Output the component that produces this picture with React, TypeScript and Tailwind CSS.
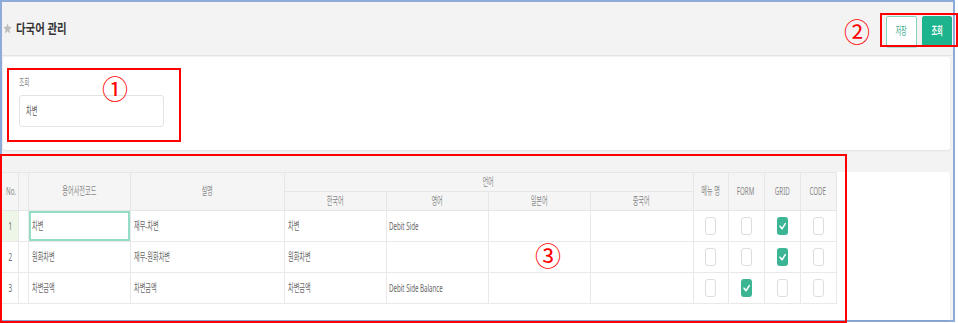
import React from 'react';

type Row = {
  no: number;
  code: string;
  desc: string;
  ko: string;
  en: string;
  menu: boolean;
  form: boolean;
  grid: boolean;
  codeChk: boolean;
};

const rows: Row[] = [
  { no: 1, code: '차변', desc: '재무-차변', ko: '차변', en: 'Debit Side', menu: false, form: false, grid: true, codeChk: false },
  { no: 2, code: '원화차변', desc: '재무-원화차변', ko: '원화차변', en: '', menu: false, form: false, grid: true, codeChk: false },
  { no: 3, code: '차변금액', desc: '차변금액', ko: '차변금액', en: 'Debit Side Balance', menu: false, form: true, grid: false, codeChk: false },
];

const colWidths = [16, 10, 102, 154, 102, 102, 102, 103, 35, 36, 36, 36];

// narrow text, the capture is squeezed sideways
const T = ({ children, center }: { children: React.ReactNode; center?: boolean }) => (
  <span
    className={
      'inline-block whitespace-nowrap scale-x-[0.56] ' + (center ? 'origin-center' : 'origin-left')
    }
  >
    {children}
  </span>
);

const Check = ({ on }: { on: boolean }) =>
  on ? (
    <span className="inline-block w-[11px] h-[18px] rounded-[3px] bg-[#3bb594] align-middle">
      <svg width="11" height="18" viewBox="0 0 11 18">
        <path d="M3 9.2 L5 11.8 L8.3 6.6" fill="none" stroke="#fff" strokeWidth="1.5" strokeLinecap="round" strokeLinejoin="round" />
      </svg>
    </span>
  ) : (
    <span className="inline-block w-[11px] h-[18px] rounded-[3px] border border-[#dddddd] bg-white align-middle" />
  );

const Mark = ({ n, cls }: { n: string; cls: string }) => (
  <span className={'absolute text-[26px] leading-none text-[#ff0000] font-["Noto_Sans_CJK_KR",sans-serif] ' + cls}>
    {n}
  </span>
);

const Box = ({ cls }: { cls: string }) => (
  <div className={'absolute border-2 border-[#ff0000] pointer-events-none ' + cls} />
);

const th = 'border border-[#e6e6e6] bg-[#f5f5f5] font-normal text-[11px] text-[#888] text-center p-0';
const td = 'border border-[#e9e9e9] text-[11px] text-[#666] p-0';

export default function App() {
  return (
    <div className="relative w-[958px] h-[323px] bg-white font-['Noto_Sans','Noto_Sans_CJK_KR',sans-serif] overflow-hidden">
      <div className="w-[955px] h-[322px] border-2 border-[#8eaadb] bg-[#f3f3f3] flex flex-col">
        {/* page header */}
        <div className="h-[54px] shrink-0 border-b border-[#e4e4e4] flex items-center justify-between pl-[1px] pr-[1px]">
          <div className="flex items-center gap-[4px]">
            <svg width="9" height="11" viewBox="0 0 10 10" preserveAspectRatio="none">
              <path d="M5 0.3 L6.3 3.5 L9.7 3.7 L7.1 6 L7.9 9.6 L5 7.6 L2.1 9.6 L2.9 6 L0.3 3.7 L3.7 3.5 Z" fill="#bdbdbd" />
            </svg>
            <span className="inline-block origin-left scale-x-[0.8] text-[13px] font-semibold text-[#333] whitespace-nowrap">
              다국어 관리
            </span>
          </div>
          <div className="flex gap-[5px] mt-[6px]">
            <button className="w-[31px] h-[31px] rounded-[2px] border border-[#86d3bd] bg-white text-[11px] text-[#32a888] shadow-[0_1px_0_#a8e0d0]">
              <T center>저장</T>
            </button>
            <button className="w-[30px] h-[31px] rounded-[2px] border border-[#1db38c] bg-[#1db38c] text-[11px] font-semibold text-white">
              <T center>조회</T>
            </button>
          </div>
        </div>

        {/* search card */}
        <div className="mt-[1px] ml-[1px] w-[947px] h-[93px] shrink-0 rounded-[3px] bg-white shadow-[0_1px_2px_rgba(0,0,0,0.08)] pl-[16px] pt-[18px]">
          <div className="text-[10px] leading-[14px] text-[#888]">
            <T>조회</T>
          </div>
          <div className="mt-[6px] w-[145px] h-[32px] rounded-[3px] border border-[#e3e3e3] flex items-center pl-[6px] text-[11px] text-[#555]">
            <T>차변</T>
          </div>
        </div>

        {/* grid card */}
        <div className="mt-[22px] w-[948px] flex-1 rounded-tr-[3px] bg-white shadow-[0_1px_2px_rgba(0,0,0,0.06)]">
          <table className="table-fixed border-collapse w-[834px]">
            <colgroup>
              {colWidths.map((w, i) => (
                <col key={i} style={{ width: w }} />
              ))}
            </colgroup>
            <thead>
              <tr className="h-[19px]">
                <th rowSpan={2} className={th + ' border-l-0'}>
                  <T center>No.</T>
                </th>
                <th rowSpan={2} className={th} />
                <th rowSpan={2} className={th}>
                  <T center>용어사전코드</T>
                </th>
                <th rowSpan={2} className={th}>
                  <T center>설명</T>
                </th>
                <th colSpan={4} className={th}>
                  <T center>언어</T>
                </th>
                <th rowSpan={2} className={th}>
                  <T center>메뉴 명</T>
                </th>
                <th rowSpan={2} className={th}>
                  <T center>FORM</T>
                </th>
                <th rowSpan={2} className={th}>
                  <T center>GRID</T>
                </th>
                <th rowSpan={2} className={th}>
                  <T center>CODE</T>
                </th>
              </tr>
              <tr className="h-[19px]">
                {['한국어', '영어', '일본어', '중국어'].map((l) => (
                  <th key={l} className={th}>
                    <T center>{l}</T>
                  </th>
                ))}
              </tr>
            </thead>
            <tbody>
              {rows.map((r) => (
                <tr key={r.no} className="h-[31px]">
                  <td className={td + ' border-l-0 text-center ' + (r.no === 1 ? 'bg-[#eef6e7]' : '')}>
                    <T center>{r.no}</T>
                  </td>
                  <td className={td} />
                  <td className={td + ' pl-[3px] ' + (r.no === 1 ? 'shadow-[inset_0_0_0_2px_#92dcc8]' : '')}>
                    <T>{r.code}</T>
                  </td>
                  <td className={td + ' pl-[3px]'}>
                    <T>{r.desc}</T>
                  </td>
                  <td className={td + ' pl-[3px]'}>
                    <T>{r.ko}</T>
                  </td>
                  <td className={td + ' pl-[2px]'}>
                    <T>{r.en}</T>
                  </td>
                  <td className={td} />
                  <td className={td} />
                  <td className={td + ' text-center'}>
                    <Check on={r.menu} />
                  </td>
                  <td className={td + ' text-center'}>
                    <Check on={r.form} />
                  </td>
                  <td className={td + ' text-center'}>
                    <Check on={r.grid} />
                  </td>
                  <td className={td + ' text-center'}>
                    <Check on={r.codeChk} />
                  </td>
                </tr>
              ))}
            </tbody>
          </table>
        </div>
      </div>

      {/* red annotation overlay */}
      <Box cls="left-[7px] top-[68px] w-[174px] h-[74px]" />
      <Box cls="left-[880px] top-[13px] w-[78px] h-[34px]" />
      <Box cls="left-0 top-[154px] w-[847px] h-[169px]" />
      <Mark n="①" cls="left-[102px] top-[75px]" />
      <Mark n="②" cls="left-[844px] top-[18px]" />
      <Mark n="③" cls="left-[535px] top-[242px]" />
    </div>
  );
}
